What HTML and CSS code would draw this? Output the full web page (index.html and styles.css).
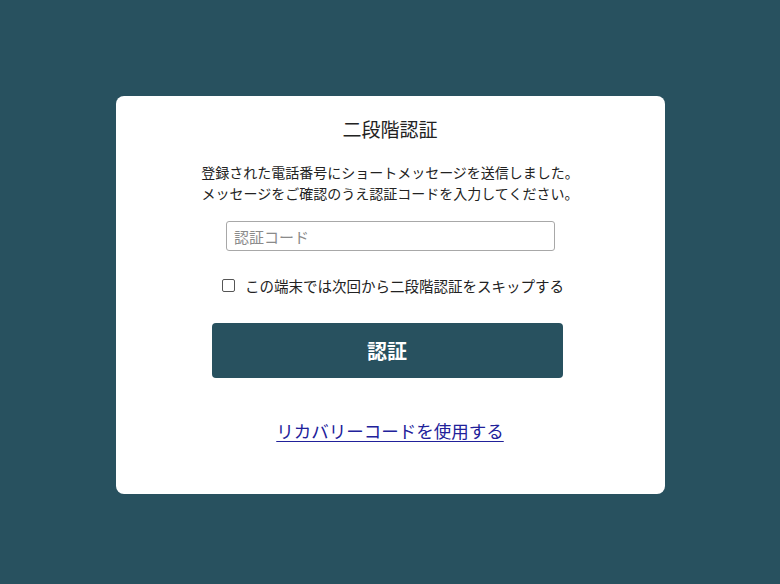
FILE: index.html
```html
<!DOCTYPE html>
<html lang="ja">
<head>
    <meta charset="UTF-8">
    <meta name="viewport" content="width=device-width, initial-scale=1.0">
    <title>二段階認証</title>
    <link rel="stylesheet" href="styles.css">
</head>
<body>
    <div class="auth-card">
        <h1 class="auth-title">二段階認証</h1>
        <p class="auth-message">登録された電話番号にショートメッセージを送信しました。<br>メッセージをご確認のうえ認証コードを入力してください。</p>
        <input type="text" class="code-input" placeholder="認証コード">
        <label class="skip-row">
            <input type="checkbox" class="skip-check">
            <span>この端末では次回から二段階認証をスキップする</span>
        </label>
        <button class="submit-btn">認証</button>
        <a href="#" class="recovery-link">リカバリーコードを使用する</a>
    </div>
</body>
</html>
```

FILE: styles.css
```css
body {
    margin: 0;
    padding: 96px 0 0;
    height: 584px;
    box-sizing: border-box;
    background-color: #28515f;
    font-family: "Noto Sans CJK JP", "Noto Sans", sans-serif;
    color: #222;
}
.auth-card {
    width: 549px;
    height: 398px;
    box-sizing: border-box;
    margin: 0 auto;
    padding: 20px 0 0;
    background-color: #fff;
    border-radius: 8px;
    display: flex;
    flex-direction: column;
    align-items: center;
}
.auth-title {
    margin: 0;
    font-size: 19px;
    font-weight: normal;
    line-height: 26px;
    color: #222;
}
.auth-message {
    margin: 20px 0 0;
    font-size: 14px;
    line-height: 21px;
    text-align: center;
    color: #222;
}
.code-input {
    margin: 17px 0 0 1px;
    width: 329px;
    height: 30px;
    box-sizing: border-box;
    padding: 0 7px;
    border: 1px solid #a8a8a8;
    border-radius: 3px;
    font-family: inherit;
    font-size: 15px;
    color: #222;
    outline: none;
}
.code-input::placeholder {
    color: #8a8a8a;
}
.skip-row {
    margin: 23px 0 0 6px;
    height: 22px;
    display: flex;
    align-items: center;
    gap: 10px;
    font-size: 14.5px;
    color: #222;
}
.skip-check {
    appearance: none;
    margin: 0;
    width: 13px;
    height: 13px;
    border: 1px solid #555;
    border-radius: 2px;
    background: #fff;
}
.submit-btn {
    margin: 27px 6px 0 0;
    width: 351px;
    height: 55px;
    border: none;
    border-radius: 4px;
    background-color: #28515f;
    color: #fff;
    font-family: inherit;
    font-size: 20px;
    font-weight: bold;
    cursor: pointer;
}
.recovery-link {
    margin: 41px 0 0;
    font-size: 17.5px;
    line-height: 24px;
    color: #21219a;
    text-decoration: underline;
    text-underline-offset: 3px;
}
```
